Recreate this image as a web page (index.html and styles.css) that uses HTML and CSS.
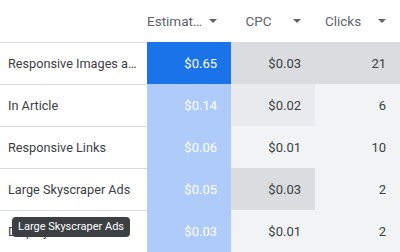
FILE: index.html
```html
<!DOCTYPE html>
<html>
<head>
<meta charset="utf-8">
<link rel="stylesheet" href="styles.css">
</head>
<body>
<div class="table">
  <div class="hcell label-col"></div>
  <div class="hcell"><span class="htext">Estimated earnings</span><span class="arrow"></span></div>
  <div class="hcell"><span class="htext">CPC</span><span class="arrow"></span></div>
  <div class="hcell"><span class="htext">Clicks</span><span class="arrow"></span></div>

  <div class="label"><span class="label-text">Responsive Images and Text Ads</span></div>
  <div class="val blue-strong">$0.65</div>
  <div class="val gray-strong">$0.03</div>
  <div class="val gray-strong">21</div>

  <div class="label"><span class="label-text">In Article</span></div>
  <div class="val blue-light">$0.14</div>
  <div class="val gray-mid">$0.02</div>
  <div class="val gray-light">6</div>

  <div class="label"><span class="label-text">Responsive Links</span></div>
  <div class="val blue-light">$0.06</div>
  <div class="val gray-light">$0.01</div>
  <div class="val gray-light">10</div>

  <div class="label"><span class="label-text">Large Skyscraper Ads</span></div>
  <div class="val blue-light">$0.05</div>
  <div class="val gray-strong">$0.03</div>
  <div class="val gray-light">2</div>

  <div class="label"><span class="label-text">Display Ads</span></div>
  <div class="val blue-light">$0.03</div>
  <div class="val gray-light">$0.01</div>
  <div class="val gray-light">2</div>
</div>
<div class="tooltip">Large Skyscraper Ads</div>
</body>
</html>
```
FILE: styles.css
```css
* { box-sizing: border-box; }
html, body {
  margin: 0;
  padding: 0;
  background: #ffffff;
  font-family: Roboto, "Noto Sans", sans-serif;
  width: 400px;
  height: 252px;
  overflow: hidden;
  position: relative;
}
.table {
  display: grid;
  grid-template-columns: 147px 84px 84px 85px;
  grid-auto-rows: 42px;
}
.hcell {
  display: flex;
  align-items: center;
  font-size: 13.5px;
  color: #5f6368;
  padding-right: 7px;
}
.htext {
  flex: 1;
  min-width: 0;
  text-align: center;
  white-space: nowrap;
  overflow: hidden;
  text-overflow: ellipsis;
}
.arrow {
  width: 22px;
  height: 24px;
  flex: none;
  position: relative;
}
.arrow::after {
  content: "";
  position: absolute;
  left: 7px;
  top: 10px;
  border-left: 4px solid transparent;
  border-right: 4px solid transparent;
  border-top: 4px solid #5f6368;
}
.label {
  border-top: 1px solid #dadce0;
  font-size: 12.7px;
  color: #3c4043;
  padding: 0 4px 0 8px;
  display: flex;
  align-items: center;
  white-space: nowrap;
  min-width: 0;
}
.label-text {
  min-width: 0;
  overflow: hidden;
  text-overflow: ellipsis;
}
.val {
  display: flex;
  align-items: center;
  justify-content: flex-end;
  padding-right: 14px;
  font-size: 13px;
  color: #3c4043;
}
.blue-strong { background: #1a73e8; color: #ffffff; }
.blue-light { background: #aecbfa; color: #ffffff; }
.gray-strong { background: #dadce0; }
.gray-mid { background: #e8eaed; }
.gray-light { background: #f1f3f4; }
.tooltip {
  position: absolute;
  left: 12px;
  top: 217px;
  height: 20px;
  padding: 0 6px;
  background: #3c4043;
  color: #ffffff;
  border-radius: 4px;
  font-size: 11px;
  line-height: 20px;
  white-space: nowrap;
}
```
